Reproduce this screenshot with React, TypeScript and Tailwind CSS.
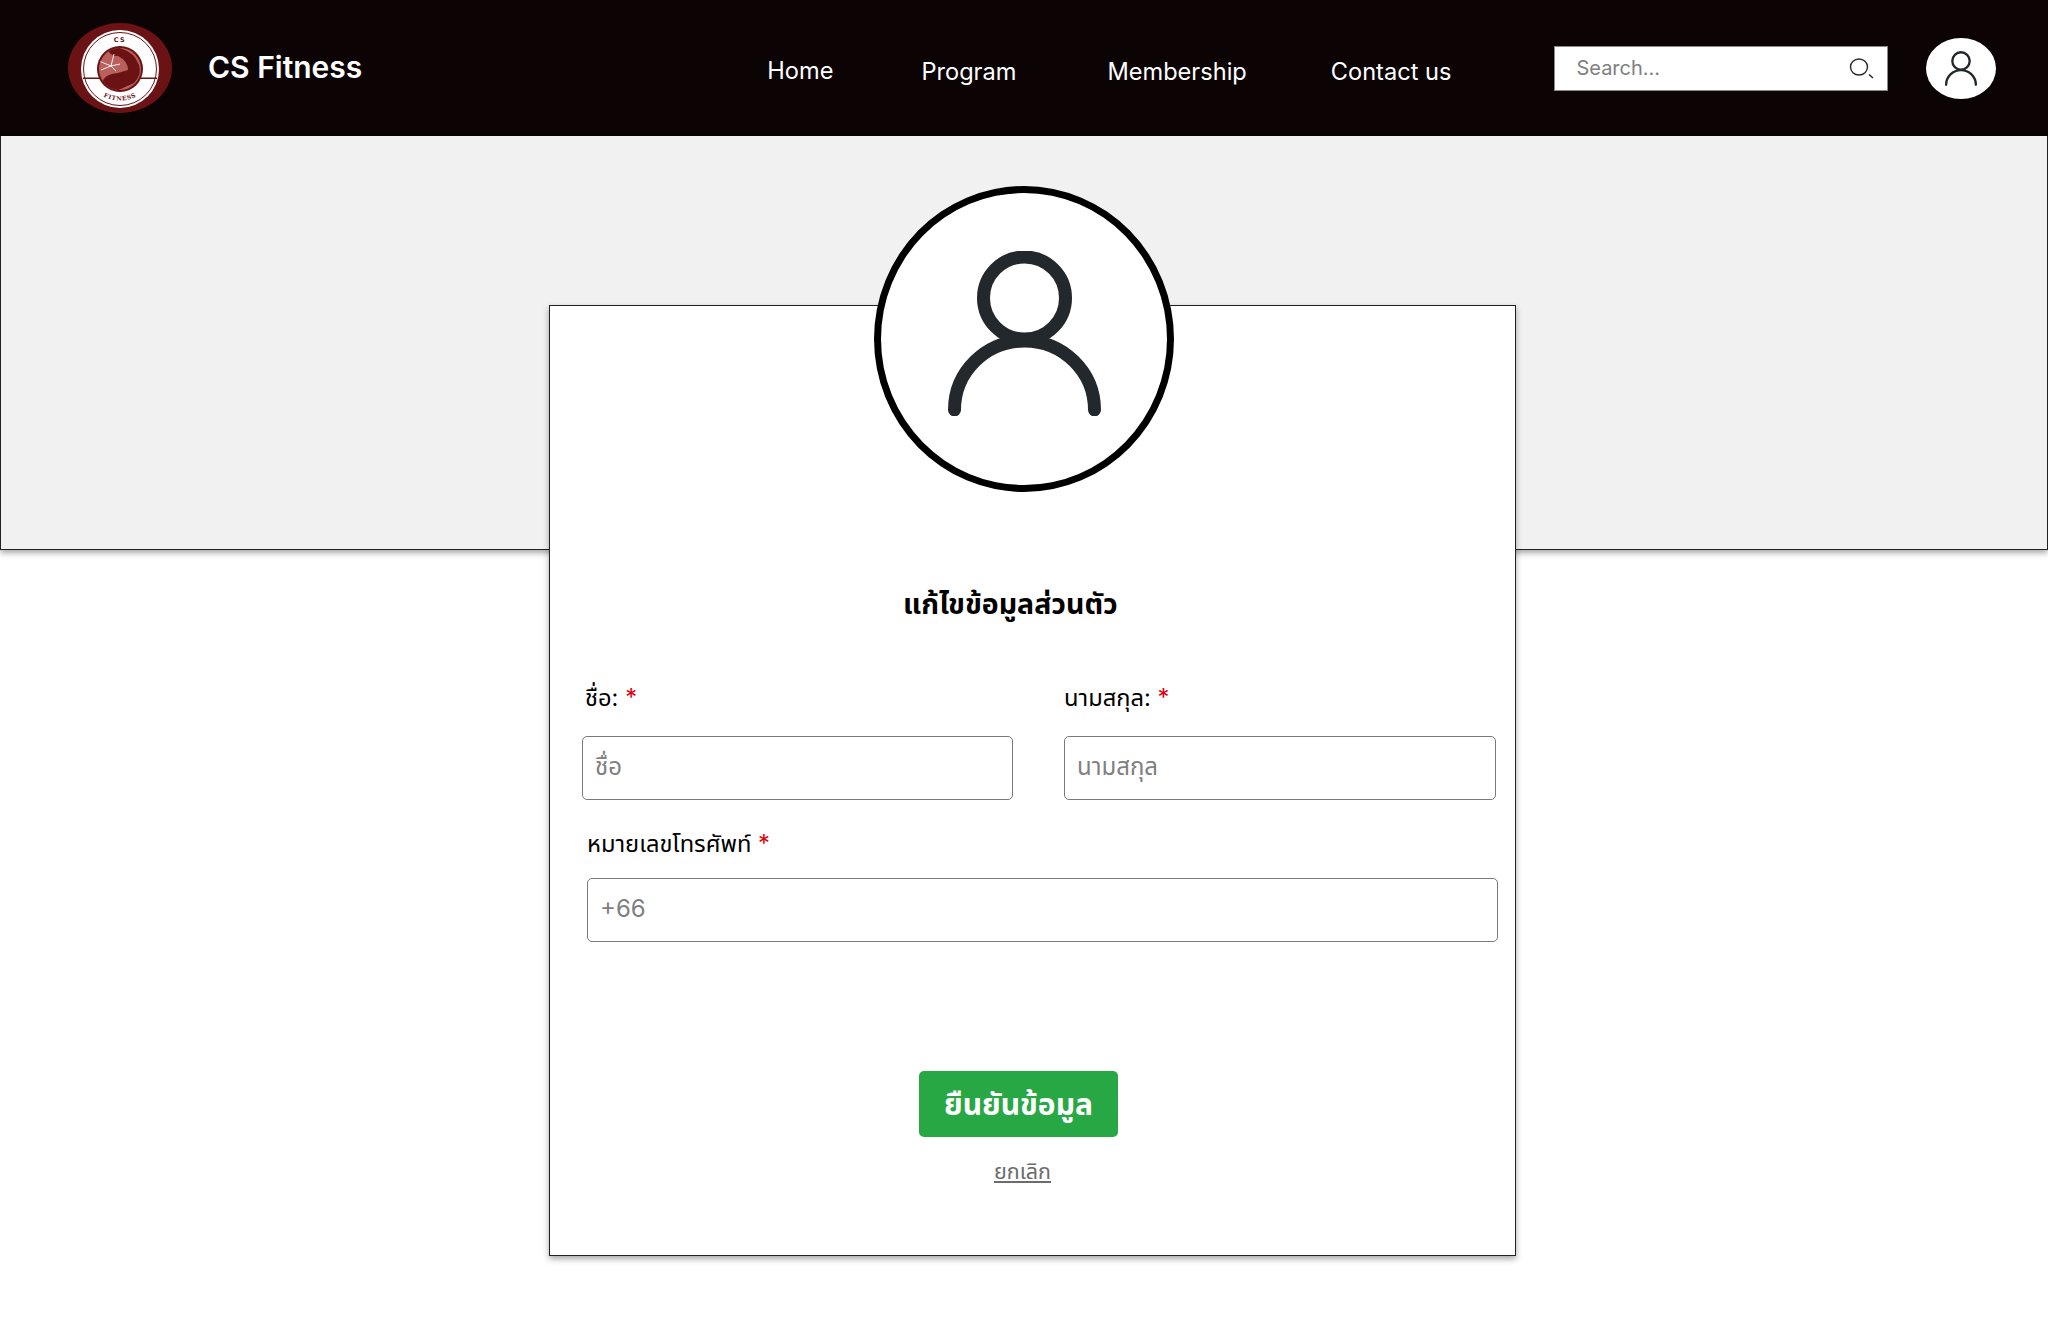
import React from 'react';

const THAI_FONT = "font-['Inter','Noto_Sans_Thai','Noto_Sans',sans-serif]";

const Logo: React.FC = () => (
  <svg width="104" height="90" viewBox="0 0 104 90" className="shrink-0">
    <defs>
      <path id="logo-bottom" d="M22 65 Q52 90 82 65" />
      <clipPath id="logo-badge">
        <circle cx="52" cy="46" r="21" />
      </clipPath>
    </defs>
    <ellipse cx="52" cy="45" rx="52" ry="45" fill="#6b1214" />
    <ellipse cx="52" cy="46" rx="39" ry="39" fill="#fff" />
    <ellipse cx="52" cy="46" rx="36.5" ry="36.5" fill="none" stroke="#6b1214" strokeWidth="1" />
    <rect x="15" y="54.5" width="74" height="1.5" fill="#6b1214" />
    <circle cx="52" cy="46" r="23" fill="#6b1214" />
    <g clipPath="url(#logo-badge)">
      <rect x="28" y="24" width="48" height="44" fill="#b9605c" />
      <path d="M40 27 Q46 22 54 26 Q66 29 71 42 Q74 52 66 60 L44 70 L34 60 Q36 51 50 50 L60 47 Q60 38 50 33 Q42 33 40 27 Z" fill="#6b1214" />
      <path d="M31 38 L43 43 M46 31 L43 43 M52 41 L43 43 M33 47 L43 43 M48 48 L43 43" stroke="#fff" strokeWidth="0.9" />
    </g>
    <text fontFamily="'DejaVu Sans',sans-serif" fontSize="6.5" fontWeight="700" fill="#6b1214" x="52" y="19" textAnchor="middle" letterSpacing="1.5">CS</text>
    <text fontFamily="'DejaVu Serif',serif" fontSize="6" fontWeight="700" fill="#6b1214" letterSpacing="0.6">
      <textPath href="#logo-bottom" startOffset="50%" textAnchor="middle">FITNESS</textPath>
    </text>
  </svg>
);

const PersonIcon: React.FC<{ className?: string; color: string; strokeWidth: number }> = ({ className, color, strokeWidth }) => (
  <svg viewBox="0 0 153 165" className={className} fill="none" stroke={color} strokeWidth={strokeWidth} strokeLinecap="round">
    <ellipse cx="76.5" cy="47" rx="41" ry="41" />
    <path d="M6.5 159 A70 69 0 0 1 146.5 159" />
  </svg>
);

const Field: React.FC<{ label: string; placeholder: string; labelClass: string; inputClass: string }> = ({
  label,
  placeholder,
  labelClass,
  inputClass,
}) => (
  <div>
    <label className={`block h-8 text-[23.7px] leading-8 text-black ${labelClass}`}>
      {label} <span className="text-[#e3000f]">*</span>
    </label>
    <input
      placeholder={placeholder}
      className={`block h-[64px] rounded-[5px] border border-[#7a7a7a] bg-white px-3 pb-[3px] text-[24px] text-black outline-none placeholder:text-[#808080] ${inputClass}`}
    />
  </div>
);

export default function App() {
  return (
    <div className={`min-h-[1321px] bg-white ${THAI_FONT}`}>
      <header className="flex h-[136px] items-center bg-[#0c0304] pl-[68px]">
        <Logo />
        <span className="mb-[2px] ml-[36px] text-[30px] font-semibold text-white">CS Fitness</span>
        <nav className="ml-[405px] flex items-center pt-[7px] text-[23.6px] text-white">
          <a className="-mt-[2px]">Home</a>
          <a className="ml-[88px]">Program</a>
          <a className="ml-[91px]">Membership</a>
          <a className="ml-[84px]">Contact us</a>
        </nav>
        <div className="ml-[103px] flex h-[45px] w-[334px] items-center border border-[#8a8a8a] bg-white pl-[21px] pr-[12px]">
          <input
            placeholder="Search..."
            className="min-w-0 flex-1 bg-transparent text-[20px] text-black outline-none placeholder:text-[#808080]"
          />
          <svg width="26" height="22" viewBox="0 0 26 22" fill="none" stroke="#2a2a2a" strokeWidth="1.4">
            <ellipse cx="10" cy="10" rx="8.5" ry="8" />
            <path d="M20 17.5 L24 21" strokeWidth="1.6" />
          </svg>
        </div>
        <div className="ml-[38px] flex h-[61px] w-[70px] items-center justify-center rounded-[50%] bg-white">
          <PersonIcon className="h-[35px] w-[38px]" color="#22272b" strokeWidth={11} />
        </div>
      </header>

      <section className="h-[414px] border-x border-b border-[#222] bg-[#f1f1f1] shadow-[0_3px_6px_rgba(0,0,0,0.35)]" />

      <main className="relative -mt-[245px] ml-[549px] h-[951px] w-[967px] border border-[#222] bg-white shadow-[0_3px_6px_rgba(0,0,0,0.35)]">
        <div className="-mt-[120px] ml-[324px] flex h-[306px] w-[300px] items-center justify-center rounded-[50%] border-[7px] border-black bg-white">
          <PersonIcon className="-mt-[11px] h-[165px] w-[153px]" color="#22282c" strokeWidth={13} />
        </div>

        <h1 className="mt-[94px] ml-[353px] h-9 text-[28.5px] font-bold leading-9 text-black">แก้ไขข้อมูลส่วนตัว</h1>

        <div className="mt-[60px] flex">
          <div className="ml-[32px]">
            <Field label="ชื่อ:" placeholder="ชื่อ" labelClass="ml-[3px] mb-[22px]" inputClass="w-[431px]" />
          </div>
          <div className="ml-[51px]">
            <Field label="นามสกุล:" placeholder="นามสกุล" labelClass="mb-[22px]" inputClass="w-[432px]" />
          </div>
        </div>

        <div className="mt-[28px] ml-[37px]">
          <Field label="หมายเลขโทรศัพท์" placeholder="+66" labelClass="mb-[18px]" inputClass="w-[911px]" />
        </div>

        <button className="mt-[129px] ml-[369px] block h-[66px] w-[199px] rounded-[5px] bg-[#28a745] text-[30px] font-bold text-white">
          ยืนยันข้อมูล
        </button>
        <a className="mt-[18px] ml-[444px] block w-fit text-[21.5px] leading-8 text-[#6c6c6c] underline">ยกเลิก</a>
      </main>
    </div>
  );
}
